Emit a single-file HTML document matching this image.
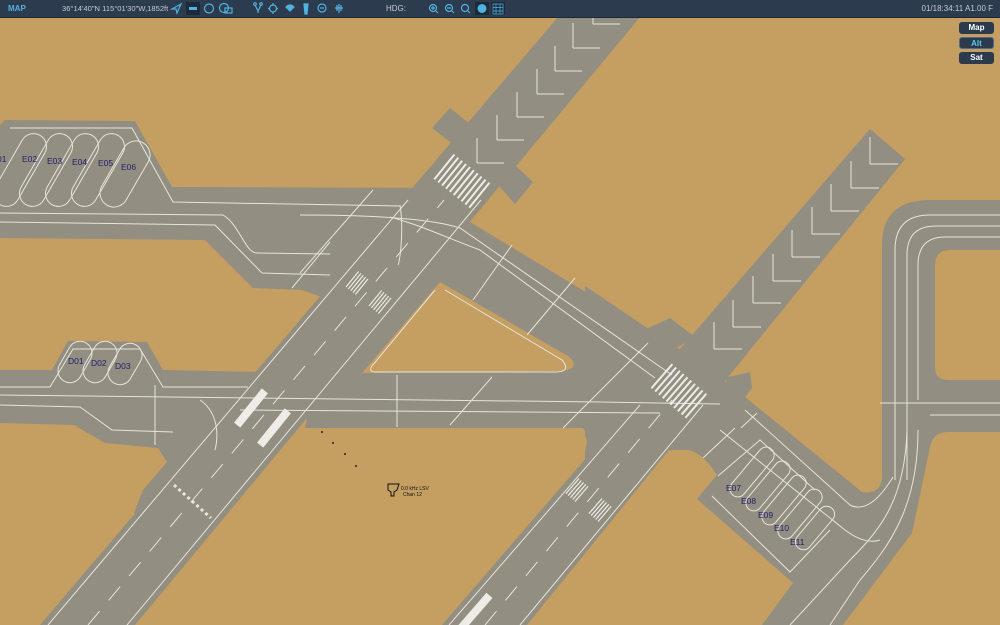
<!DOCTYPE html>
<html><head><meta charset="utf-8"><style>
html,body{margin:0;padding:0;width:1000px;height:625px;overflow:hidden;background:#c59e61;font-family:"Liberation Sans",sans-serif}
#bar{position:absolute;left:0;top:0;width:1000px;height:17px;background:#2c3b4e;border-bottom:1px solid #1d2835;color:#c3ccd6;font-size:8px;line-height:17px}
#bar span{position:absolute;top:0}
.btn{position:absolute;left:959px;width:35px;height:12px;background:#2b3a4d;border-radius:3px;color:#fff;font-weight:bold;font-size:8px;text-align:center;line-height:12px;box-sizing:border-box}
</style></head><body>
<svg width="1000" height="625" style="position:absolute;left:0;top:0" xmlns="http://www.w3.org/2000/svg">
<g fill="#928e81">
<rect x="585" y="195" width="415" height="430"/>
<polygon points="470,222 665,340 592,442 583,428 305,428 330,300"/>
<polygon points="0,125 5,120 135,121 172,187 440,188 330,300 302,290 253,288 205,240 0,238"/>
<polygon points="0,370 52,370 68,341 147,342 163,370 260,372 160,513 134,513 143,490 167,462 158,448 105,443 74,425 0,423"/>
</g>
<g fill="#c59e61">
<path d="M585,190 H1000 V200 H930 Q882,200 882,245 V478 Q880,495 862,492 L745,397 L700,362 L665,340 L585,286 Z"/>
<path d="M950,250 H1000 V380 H948 Q935,380 935,367 V265 Q935,250 950,250 Z"/>
<path d="M948,432 H1000 V625 H843 L912,533 L930,447 Q933,432 948,432 Z"/>
<path d="M600,450 L688,450 Q702,452 717,475 L697,499 L793,583 L762,625 L500,625 Z"/>
<path d="M312,428 L572,428 Q592,432 585,450 L440,625 L134,625 L187,619 L214,601 Z"/>
<path d="M440,282 L362,373 L562,371 Q582,368 568,356 Z"/>
</g>
<g fill="#928e81">
<polygon points="40,625 135,625 640,17 558,17"/>
<polygon points="442,625 527,625 905,159 870,129"/>
<polygon points="432,128 450,108 475,128 458,148"/>
<polygon points="498,185 516,166 533,182 515,204"/>
<polygon points="640,332 670,318 695,337 665,355"/>
<polygon points="725,378 750,372 752,388 745,397 730,392"/>
</g>
<g stroke="#e6e4dc" stroke-width="1" fill="none">
<line x1="48" y1="625" x2="408" y2="200"/><line x1="127" y1="625" x2="481" y2="200"/>
<line x1="88" y1="625" x2="444" y2="200" stroke-dasharray="18 14"/>
<line x1="449" y1="625" x2="640" y2="405"/><line x1="520" y1="625" x2="703" y2="405"/>
<line x1="485" y1="625" x2="672" y2="400" stroke-dasharray="18 14"/>
<path d="M477,163 V138 M477,163 H504 M497,140 V115 M497,140 H524 M517,117 V92 M517,117 H544 M537,94 V69 M537,94 H564 M555,71 V46 M555,71 H582 M573,48 V23 M573,48 H600 M593,24 V18 M593,24 H620"/>
<path d="M870,164 V137 M870,164 H898 M851,188 V161 M851,188 H879 M831,211 V184 M831,211 H859 M812,234 V207 M812,234 H840 M792,257 V230 M792,257 H820 M773,281 V254 M773,281 H801 M753,303 V276 M753,303 H781 M733,327 V300 M733,327 H761 M714,349 V322 M714,349 H742"/>
<path d="M10,128 H132 L173,202 L400,206"/>
<path d="M0,213 L223,215 C240,225 245,253 257,253 L330,254"/>
<path d="M0,222 L215,225 L262,273 L330,275"/>
<path d="M390,217 C420,225 440,235 480,250 L655,378"/>
<path d="M300,215 C330,215 420,215 460,228 L672,375"/>
<path d="M400,205 C404,230 400,260 398,265"/>
<path d="M0,387 H50 L73,349 H140 L163,387 H248"/>
<path d="M0,395 L600,402 L720,404"/>
<path d="M0,405 L80,407 L112,430 L173,432"/>
<path d="M240,410 L660,413"/>
<path d="M155,385 V445"/><path d="M397,375 V427"/>
<path d="M450,425 L492,377"/><path d="M563,428 L648,343"/>
<path d="M473,300 L512,245"/><path d="M527,335 L575,278"/>
<path d="M300,273 L373,190"/><path d="M292,288 L330,242"/>
<path d="M200,400 C215,410 220,430 215,450"/>
<path d="M435,290 L372,366 Q368,372 376,372 H555 Q572,372 562,360 L445,290"/>
<path d="M895,480 V250 Q895,215 930,215 H1000"/>
<path d="M907,480 V255 Q907,226 936,226 H1000"/>
<path d="M918,400 V265 Q918,237 945,237 H1000"/>
<path d="M918,403 H1000 M930,415 H1000 M880,403 H935"/>
<path d="M745,410 L850,505 Q870,515 893,477"/>
<path d="M720,430 L845,530 Q865,545 880,540"/>
<path d="M907,430 C905,500 880,530 850,560 L790,625"/>
<path d="M918,430 C918,500 895,540 860,580 L830,625"/>
<path d="M741,428 L757,413 M703,458 L735,428"/>
<path d="M712,496 L790,572 L830,530"/>
<path d="M718,476 L760,440 L815,490"/>
<g transform="translate(20,170) rotate(-60)"><rect x="-40" y="-13" width="80" height="26" rx="13"/></g>
<g transform="translate(46,170) rotate(-60)"><rect x="-40" y="-13" width="80" height="26" rx="13"/></g>
<g transform="translate(72,170) rotate(-60)"><rect x="-40" y="-13" width="80" height="26" rx="13"/></g>
<g transform="translate(98,170) rotate(-60)"><rect x="-40" y="-13" width="80" height="26" rx="13"/></g>
<g transform="translate(125,174) rotate(-60)"><rect x="-36" y="-14" width="72" height="28" rx="14"/></g>
<g transform="translate(75,362) rotate(-60)"><rect x="-22" y="-12" width="44" height="24" rx="12"/></g>
<g transform="translate(100,362) rotate(-60)"><rect x="-22" y="-12" width="44" height="24" rx="12"/></g>
<g transform="translate(125,364) rotate(-60)"><rect x="-22" y="-12" width="44" height="24" rx="12"/></g>
<g transform="translate(752,472) rotate(-50)"><rect x="-30" y="-8" width="60" height="16" rx="8"/></g>
<g transform="translate(768,486) rotate(-50)"><rect x="-30" y="-8" width="60" height="16" rx="8"/></g>
<g transform="translate(784,500) rotate(-50)"><rect x="-30" y="-8" width="60" height="16" rx="8"/></g>
<g transform="translate(800,514) rotate(-50)"><rect x="-30" y="-8" width="60" height="16" rx="8"/></g>
<g transform="translate(815,528) rotate(-50)"><rect x="-26" y="-8" width="52" height="16" rx="8"/></g>
<path d="M174,485 L211,518" stroke-width="3" stroke-dasharray="3 3"/>
</g>
<g stroke="#eeece6" stroke-width="2">
<g transform="translate(463,182) rotate(-51)">
<path d="M-16,-24H16M-16,-19H16M-16,-14H16M-16,-9H16M-16,-4H16M-16,1H16M-16,6H16M-16,11H16M-16,16H16M-16,21H16"/></g>
<g transform="translate(680,392) rotate(-49)">
<path d="M-16,-24H16M-16,-19H16M-16,-14H16M-16,-9H16M-16,-4H16M-16,1H16M-16,6H16M-16,11H16M-16,16H16M-16,21H16"/></g>
<g transform="translate(357,283) rotate(-51)" stroke-width="1.2"><path d="M-10,-6H10M-10,-3H10M-10,0H10M-10,3H10M-10,6H10"/></g>
<g transform="translate(380,302) rotate(-51)" stroke-width="1.2"><path d="M-10,-6H10M-10,-3H10M-10,0H10M-10,3H10M-10,6H10"/></g>
<g transform="translate(577,490) rotate(-49)" stroke-width="1.2"><path d="M-10,-6H10M-10,-3H10M-10,0H10M-10,3H10M-10,6H10"/></g>
<g transform="translate(600,510) rotate(-49)" stroke-width="1.2"><path d="M-10,-6H10M-10,-3H10M-10,0H10M-10,3H10M-10,6H10"/></g>
</g>
<g fill="#eeece6">
<g transform="translate(251,408) rotate(-51)"><rect x="-22" y="-4" width="44" height="8"/></g>
<g transform="translate(274,428) rotate(-51)"><rect x="-22" y="-4" width="44" height="8"/></g>
<g transform="translate(475,612) rotate(-49)"><rect x="-22" y="-4" width="44" height="8"/></g>
</g>
<g fill="#222">
<circle cx="322" cy="432" r="1"/><circle cx="333" cy="443" r="1"/><circle cx="345" cy="454" r="1"/><circle cx="356" cy="466" r="1"/>
</g>
<path d="M388,484 L399,484 L397,490 L394,492 L394,496 L391,496 L391,492 L388,490 Z" fill="none" stroke="#111" stroke-width="1"/>
<text x="401" y="490" font-size="5" fill="#111" font-family="Liberation Sans">0.0 kHz LSV</text>
<text x="403" y="496" font-size="5" fill="#111" font-family="Liberation Sans">Chan 12</text>
<g font-size="8.5" fill="#23216e" font-family="Liberation Sans">
<text x="-3" y="162">01</text><text x="22" y="162">E02</text><text x="47" y="164">E03</text><text x="72" y="165">E04</text><text x="98" y="166">E05</text><text x="121" y="170">E06</text>
<text x="68" y="364">D01</text><text x="91" y="366">D02</text><text x="115" y="369">D03</text>
<text x="726" y="491">E07</text><text x="741" y="504">E08</text><text x="758" y="518">E09</text><text x="774" y="531">E10</text><text x="790" y="545">E11</text>
</g>
</svg>
<div id="bar">
<span style="left:8px;color:#4fb3e0;font-weight:bold">MAP</span>
<span style="left:62px;font-size:7.6px">36°14'40"N 115°01'30"W,1852ft</span>
<span style="left:386px">HDG:</span>
<span style="right:7px">01/18:34:11 A1.00 F</span>
<svg width="520" height="17" style="position:absolute;left:0;top:0" fill="none" stroke="#4fb3e0" stroke-width="1.2">
<path d="M172,9 L181,4 L177,13 L176,9 Z"/>
<rect x="186" y="2" width="14" height="13" fill="#1d2a3a" stroke="none"/><rect x="189" y="7" width="8" height="3" fill="#4fb3e0" stroke="none"/>
<circle cx="209" cy="8.5" r="4.5"/>
<circle cx="224" cy="8" r="4.5"/><rect x="225" y="8" width="7" height="5"/>
<path d="M255,5 L258,11 L261,5 M258,11 V13"/><circle cx="255" cy="4" r="1.3"/><circle cx="261" cy="4" r="1.3"/>
<circle cx="273" cy="8.5" r="3.5"/><path d="M273,3 V5 M273,12 V14 M268,8.5 H270 M276,8.5 H278"/>
<path d="M286,7 Q290,3 294,7 L290,11 Z" fill="#4fb3e0"/>
<path d="M304,4 H308 L307,14 H305 Z" fill="#4fb3e0"/>
<circle cx="322" cy="8" r="4"/><path d="M320,8 H324"/>
<path d="M335,8 H343 M337,5 V11 M339,4 V13 M341,5 V11"/>
<circle cx="433" cy="8" r="3.5"/><path d="M436,11 L438,13 M431,8 H435 M433,6 V10"/>
<circle cx="449" cy="8" r="3.5"/><path d="M452,11 L454,13 M447,8 H451"/>
<circle cx="465" cy="8" r="3.5"/><path d="M468,11 L470,13"/>
<rect x="475" y="2" width="14" height="13" fill="#1d2a3a" stroke="none"/><circle cx="482" cy="8.5" r="4.5" fill="#4fb3e0" stroke="none"/>
<rect x="491" y="2" width="14" height="13" fill="#1d2a3a" stroke="none"/><path d="M493,4 H503 V14 H493 Z M496,4 V14 M500,4 V14 M493,7.5 H503 M493,11 H503" stroke-width="0.7"/>
</svg>
</div>
<div class="btn" style="top:22px">Map</div>
<div class="btn" style="top:37px;border:1px solid #4c6d8e;color:#5ac8f0">Alt</div>
<div class="btn" style="top:52px">Sat</div>
</body></html>
